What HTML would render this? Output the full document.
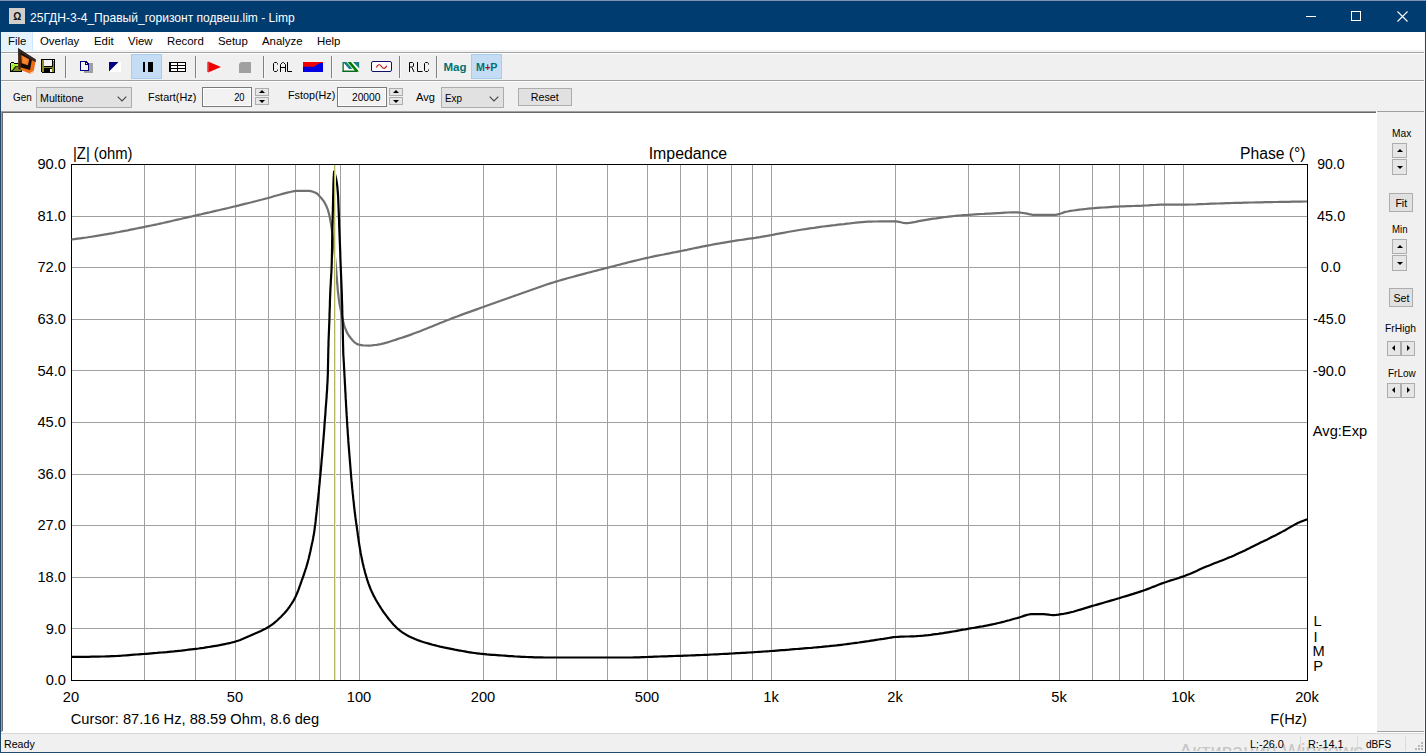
<!DOCTYPE html>
<html>
<head>
<meta charset="utf-8">
<title>Limp</title>
<style>
html,body{margin:0;padding:0;}
body{width:1426px;height:753px;overflow:hidden;background:#f0f0f0;font-family:"Liberation Sans",sans-serif;font-size:12px;color:#000;position:relative;}
.abs{position:absolute;}
#titlebar{left:0;top:0;width:1426px;height:32px;background:#013c70;border-top:1px solid #7f93ad;box-sizing:border-box;}
#title{left:30px;top:10px;color:#fff;font-size:12.05px;white-space:nowrap;line-height:16px;}
#appicon{left:9px;top:8px;width:16px;height:16px;background:#d2cfcb;}
#menubar{left:1px;top:32px;width:1424px;height:18px;background:#fff;border-bottom:1px solid #f0f0f0;box-shadow:0 1px 0 #f6f6f6;}
.mi{position:absolute;top:34.4px;font-size:11.4px;line-height:14px;white-space:nowrap;}
#filehl{left:1px;top:32px;width:31px;height:19px;background:#e5f3ff;border-right:1px solid #cce8ff;}
#tb{left:1px;top:54px;width:1424px;height:26px;background:#f0f0f0;}
#db{left:1px;top:82px;width:1424px;height:29px;background:#f0f0f0;}
.hline{position:absolute;left:1px;width:1424px;height:1px;}
.lbl{position:absolute;transform-origin:0 0;font-size:11.3px;line-height:13px;white-space:nowrap;}
.combo{position:absolute;background:#e1e1e1;border:1px solid #adadad;box-sizing:border-box;}
.edit{position:absolute;background:#f2f2f2;border:1px solid #7a7a7a;box-sizing:border-box;box-shadow:inset 0 0 0 1px #fff;}
.btn{position:absolute;background:#e1e1e1;border:1px solid #adadad;box-sizing:border-box;text-align:center;font-size:11.3px;}
.sep{position:absolute;width:1px;top:56px;height:22px;background:#808080;border-right:1px solid #f8f8f8;}
#view{left:3px;top:113px;width:1373px;height:619px;background:#fff;}
#status{left:1px;top:734px;width:1424px;height:18px;background:#f0f0f0;}

.tbon{background:#c4ddf4;border:1px solid #a6cdf0;box-sizing:border-box;}
.tbt{font-weight:bold;font-size:11.5px;line-height:14px;white-space:nowrap;}
.ct{transform-origin:0 0;position:absolute;left:3px;top:4px;font-size:11.3px;line-height:13px;}
.chev{position:absolute;right:4px;top:8px;}
.et{transform-origin:100% 0;position:absolute;right:6px;top:3px;font-size:11.3px;line-height:13px;}
.spin{position:absolute;width:14px;height:19px;}
.spin i{position:absolute;left:0;width:100%;box-sizing:border-box;border:1px solid #adadad;background:#e6e6e6;}
.spin i.up{top:0;height:8px;}
.spin i.dn{top:9px;height:8px;}
.spin i.up:after{content:"";position:absolute;left:50%;top:50%;margin:-2px 0 0 -3px;border:3px solid transparent;border-top:none;border-bottom:3px solid #000;}
.spin i.dn:after{content:"";position:absolute;left:50%;top:50%;margin:-1px 0 0 -3px;border:3px solid transparent;border-bottom:none;border-top:3px solid #000;}
.hspin{position:absolute;width:28px;height:15px;}
.hspin i{position:absolute;top:0;height:15px;width:14px;box-sizing:border-box;border:1px solid #adadad;background:#e6e6e6;}
.hspin i.lf{left:0;} .hspin i.rt{left:14px;}
.hspin i.lf:after{content:"";position:absolute;left:50%;top:50%;margin:-4px 0 0 -2px;border:3px solid transparent;border-left:none;border-right:3px solid #000;}
.hspin i.rt:after{content:"";position:absolute;left:50%;top:50%;margin:-4px 0 0 -1px;border:3px solid transparent;border-right:none;border-left:3px solid #000;}
#wm{left:1179px;top:738px;height:13px;overflow:hidden;font-size:20px;line-height:26px;color:#c6c6c6;white-space:nowrap;}
svg text{font-family:"Liberation Sans",sans-serif;}
</style>
</head>
<body>
<div class="abs" id="titlebar"></div>
<div class="abs" id="appicon"></div>
<div class="abs" id="title">25ГДН-3-4_Правый_горизонт подвеш.lim - Limp</div>
<div class="abs" id="menubar"></div>
<div class="abs" id="filehl"></div>
<div class="mi" style="left:8px">File</div>
<div class="mi" style="left:40px">Overlay</div>
<div class="mi" style="left:94px">Edit</div>
<div class="mi" style="left:128px">View</div>
<div class="mi" style="left:167px">Record</div>
<div class="mi" style="left:218px">Setup</div>
<div class="mi" style="left:262px">Analyze</div>
<div class="mi" style="left:317px">Help</div>
<div class="hline" style="top:52px;background:#a0a0a0"></div>
<div class="hline" style="top:53px;background:#fff"></div>
<div class="abs" id="tb"></div>
<div class="hline" style="top:80px;background:#a0a0a0"></div>
<div class="hline" style="top:81px;background:#fff"></div>
<div class="abs" id="db"></div>
<!-- toolbar pressed buttons -->
<div class="abs tbon" style="left:131px;top:54px;width:31px;height:25px"></div>
<div class="abs tbon" style="left:471px;top:54px;width:31px;height:25px"></div>
<div class="sep" style="left:65px"></div>
<div class="sep" style="left:195px"></div>
<div class="sep" style="left:263px"></div>
<div class="sep" style="left:331px"></div>
<div class="sep" style="left:399px"></div>
<div class="sep" style="left:436px"></div>
<div class="abs tbt" style="left:443.500px;top:60px;color:#007272">Mag</div>
<div class="abs tbt" style="left:476px;top:60px;color:#007272;transform:scaleX(0.93);transform-origin:0 0">M<span style="color:#a80018;font-size:10px;position:relative;top:-0.500px">+</span>P</div>
<!-- dialog bar -->
<div class="lbl" style="left:12.5px;top:91px;transform:scaleX(0.88)">Gen</div>
<div class="combo" style="left:36px;top:87px;width:96px;height:21px"><span class="ct" style="transform:scaleX(0.945)">Multitone</span><svg class="chev" width="10" height="6" viewBox="0 0 10 6"><path d="M0.7,0.7 L5,5 L9.3,0.7" fill="none" stroke="#444" stroke-width="1.1"/></svg></div>
<div class="lbl" style="left:147.5px;top:90.500px;transform:scaleX(0.965)">Fstart(Hz)</div>
<div class="edit" style="left:202px;top:87px;width:50px;height:20px"><span class="et" style="transform:scaleX(0.83)">20</span></div>
<div class="spin" style="left:255px;top:88px"><i class="up"></i><i class="dn"></i></div>
<div class="lbl" style="left:287.5px;top:88.700px;transform:scaleX(0.955)">Fstop(Hz)</div>
<div class="edit" style="left:337px;top:87px;width:50px;height:20px"><span class="et" style="transform:scaleX(0.906)">20000</span></div>
<div class="spin" style="left:389px;top:88px"><i class="up"></i><i class="dn"></i></div>
<div class="lbl" style="left:416px;top:91px;transform:scaleX(0.98)">Avg</div>
<div class="combo" style="left:441px;top:87px;width:63px;height:21px"><span class="ct" style="transform:scaleX(0.875)">Exp</span><svg class="chev" width="10" height="6" viewBox="0 0 10 6"><path d="M0.7,0.7 L5,5 L9.3,0.7" fill="none" stroke="#444" stroke-width="1.1"/></svg></div>
<div class="btn" style="left:518px;top:88px;width:54px;height:18px;line-height:16px"><span style="display:inline-block;transform:scaleX(0.947)">Reset</span></div>
<!-- view -->
<div class="abs" style="left:1px;top:111px;width:1375px;height:1px;background:#a0a0a0"></div>
<div class="abs" style="left:2px;top:112px;width:1374px;height:1px;background:#696969"></div>
<div class="abs" style="left:1377px;top:111px;width:47px;height:1px;background:#a0a0a0"></div>
<div class="abs" style="left:1px;top:111px;width:1px;height:622px;background:#8aa4bd"></div><div class="abs" style="left:2px;top:112px;width:1px;height:619px;background:#696969"></div><div class="abs" style="left:2px;top:731px;width:1374px;height:1px;background:#e3e3e3"></div>
<div class="abs" id="view"></div>
<div class="abs" style="left:1376px;top:111px;width:1px;height:622px;background:#fff"></div>
<div class="abs" style="left:1377px;top:731px;width:47px;height:1px;background:#a0a0a0"></div>
<div class="abs" style="left:1px;top:732px;width:1424px;height:1px;background:#fff"></div>
<!-- right panel -->
<div class="lbl" style="left:1391.5px;top:127px;transform:scaleX(0.905)">Max</div>
<div class="spin" style="left:1392px;top:143px;width:15px"><i class="up" style="height:15px"></i><i class="dn" style="height:16px;top:16px"></i></div>
<div class="btn" style="left:1389px;top:193px;width:24px;height:19px;line-height:18px"><span style="display:inline-block;transform:scaleX(0.94)">Fit</span></div>
<div class="lbl" style="left:1392px;top:223px;transform:scaleX(0.85)">Min</div>
<div class="spin" style="left:1392px;top:239px;width:15px"><i class="up" style="height:15px"></i><i class="dn" style="height:16px;top:16px"></i></div>
<div class="btn" style="left:1389px;top:288px;width:24px;height:19px;line-height:18px"><span style="display:inline-block;transform:scaleX(0.94)">Set</span></div>
<div class="lbl" style="left:1384.5px;top:322px;transform:scaleX(0.91)">FrHigh</div>
<div class="hspin" style="left:1387px;top:341px"><i class="lf"></i><i class="rt"></i></div>
<div class="lbl" style="left:1387.5px;top:367px;transform:scaleX(0.88)">FrLow</div>
<div class="hspin" style="left:1387px;top:383px"><i class="lf"></i><i class="rt"></i></div>
<!-- status -->
<div class="abs" style="left:1px;top:733px;width:1424px;height:1px;background:#d7d7d7"></div>
<div class="abs" id="status"></div>
<div class="abs" id="wm">Активация Windows</div>
<div class="lbl" style="left:4px;top:737px;font-size:11.7px;transform:scaleX(0.91)">Ready</div>
<div class="lbl" style="left:1250px;top:736.5px;font-size:11.7px;transform:scaleX(0.93)">L:-26.0</div>
<div class="lbl" style="left:1308px;top:736.5px;font-size:11.7px;transform:scaleX(0.93)">R:-14.1</div>
<div class="lbl" style="left:1366px;top:736.5px;font-size:11.7px;transform:scaleX(0.86)">dBFS</div>
<div class="abs" style="left:1300px;top:736px;width:1px;height:15px;background:#dadada"></div>
<div class="abs" style="left:1357px;top:736px;width:1px;height:15px;background:#dadada"></div>
<div class="abs" style="left:1405px;top:736px;width:1px;height:15px;background:#dadada"></div>
<!-- window borders -->
<div class="abs" style="left:0;top:32px;width:1px;height:721px;background:#21486e"></div>
<div class="abs" style="left:1424px;top:32px;width:1px;height:720px;background:#f4f9fd"></div>
<div class="abs" style="left:1425px;top:32px;width:1px;height:721px;background:#21486e"></div>
<div class="abs" style="left:0;top:752px;width:1426px;height:1px;background:#21486e"></div>
<svg class="abs" style="left:0;top:0" width="1426" height="753" viewBox="0 0 1426 753" shape-rendering="crispEdges">
<g fill="#a0a0a0">
<rect x="144" y="164" width="1" height="516"/>
<rect x="195" y="164" width="1" height="516"/>
<rect x="235" y="164" width="1" height="516"/>
<rect x="268" y="164" width="1" height="516"/>
<rect x="295" y="164" width="1" height="516"/>
<rect x="319" y="164" width="1" height="516"/>
<rect x="340" y="164" width="1" height="516"/>
<rect x="359" y="164" width="1" height="516"/>
<rect x="483" y="164" width="1" height="516"/>
<rect x="556" y="164" width="1" height="516"/>
<rect x="607" y="164" width="1" height="516"/>
<rect x="647" y="164" width="1" height="516"/>
<rect x="680" y="164" width="1" height="516"/>
<rect x="707" y="164" width="1" height="516"/>
<rect x="731" y="164" width="1" height="516"/>
<rect x="752" y="164" width="1" height="516"/>
<rect x="771" y="164" width="1" height="516"/>
<rect x="895" y="164" width="1" height="516"/>
<rect x="968" y="164" width="1" height="516"/>
<rect x="1019" y="164" width="1" height="516"/>
<rect x="1059" y="164" width="1" height="516"/>
<rect x="1092" y="164" width="1" height="516"/>
<rect x="1119" y="164" width="1" height="516"/>
<rect x="1143" y="164" width="1" height="516"/>
<rect x="1164" y="164" width="1" height="516"/>
<rect x="1183" y="164" width="1" height="516"/>
<rect x="71" y="216" width="1236" height="1"/>
<rect x="71" y="267" width="1236" height="1"/>
<rect x="71" y="319" width="1236" height="1"/>
<rect x="71" y="370" width="1236" height="1"/>
<rect x="71" y="422" width="1236" height="1"/>
<rect x="71" y="474" width="1236" height="1"/>
<rect x="71" y="525" width="1236" height="1"/>
<rect x="71" y="577" width="1236" height="1"/>
<rect x="71" y="628" width="1236" height="1"/>
</g>
<rect x="71.5" y="164.5" width="1236" height="516" fill="none" stroke="#000" stroke-width="1"/>
<g shape-rendering="auto" fill="none" stroke-linejoin="round" stroke-linecap="butt">
<path d="M71.5,239.5 L74.5,239.1 L77.5,238.7 L80.4,238.3 L83.4,237.9 L86.4,237.5 L89.3,237.0 L92.3,236.6 L92.8,236.5 L95.3,236.1 L98.2,235.6 L101.2,235.1 L104.1,234.6 L107.1,234.1 L110.0,233.6 L113.0,233.1 L115.9,232.5 L118.9,232.0 L121.8,231.4 L124.8,230.8 L127.7,230.3 L130.7,229.7 L133.6,229.1 L136.6,228.5 L139.5,227.9 L142.5,227.3 L144.6,226.9 L145.4,226.7 L148.3,226.1 L151.3,225.5 L154.2,224.9 L157.1,224.3 L160.1,223.6 L163.0,223.0 L165.9,222.3 L168.8,221.7 L171.8,221.0 L174.7,220.3 L177.6,219.6 L180.5,219.0 L183.5,218.3 L186.4,217.6 L189.3,216.9 L192.2,216.3 L195.2,215.6 L195.6,215.5 L198.1,214.9 L201.0,214.3 L203.9,213.6 L206.9,212.9 L209.8,212.3 L212.7,211.6 L215.6,210.9 L218.6,210.2 L221.5,209.5 L224.4,208.9 L227.3,208.2 L230.2,207.5 L233.1,206.8 L235.5,206.2 L236.1,206.1 L239.0,205.4 L241.9,204.6 L244.8,203.9 L247.7,203.2 L250.6,202.5 L253.5,201.7 L256.4,201.0 L259.3,200.2 L262.2,199.5 L265.2,198.7 L268.1,198.0 L268.3,197.9 L271.0,197.2 L273.8,196.3 L276.7,195.5 L279.6,194.7 L282.5,193.9 L285.4,193.1 L288.3,192.4 L289.0,192.3 L291.3,191.8 L294.2,191.2 L297.2,190.8 L298.0,190.8 L300.2,190.8 L303.2,190.8 L306.2,190.8 L308.7,190.8 L309.2,190.8 L312.2,191.4 L315.0,192.5 L316.0,193.0 L317.5,194.0 L319.6,196.2 L320.0,196.6 L321.6,198.5 L323.5,200.9 L324.5,202.5 L325.0,203.4 L326.4,206.1 L327.5,208.9 L327.6,209.2 L328.4,211.7 L329.2,214.6 L329.8,217.6 L330.3,220.0 L330.4,220.5 L330.9,223.5 L331.4,226.4 L331.8,229.4 L332.2,232.4 L332.6,235.4 L332.7,236.0 L333.0,238.3 L333.3,241.3 L333.7,244.3 L334.0,247.3 L334.3,250.3 L334.6,253.2 L334.9,256.2 L335.2,259.2 L335.3,260.0 L335.5,262.2 L335.8,265.2 L336.0,268.2 L336.3,271.2 L336.5,274.2 L336.7,277.2 L337.0,280.2 L337.2,283.2 L337.5,286.1 L337.7,289.1 L338.0,292.1 L338.4,295.1 L338.6,297.2 L338.7,298.1 L339.1,301.0 L339.6,304.0 L340.1,307.0 L340.7,309.9 L341.2,312.9 L341.3,313.2 L341.8,315.8 L342.5,318.7 L343.2,321.6 L344.0,324.5 L344.6,326.5 L344.9,327.4 L346.0,330.2 L347.0,332.5 L347.2,332.9 L348.8,335.5 L350.3,337.5 L350.6,337.9 L352.5,340.3 L354.5,342.3 L354.6,342.4 L357.1,344.1 L359.2,344.8 L359.9,344.9 L362.9,345.3 L365.9,345.5 L368.0,345.6 L368.9,345.6 L371.9,345.4 L374.9,345.0 L376.8,344.8 L377.9,344.6 L380.8,344.1 L383.7,343.4 L386.6,342.6 L389.5,341.7 L392.4,340.8 L395.3,339.9 L398.1,338.9 L400.0,338.3 L401.0,338.0 L403.8,337.1 L406.7,336.1 L409.5,335.1 L412.3,334.1 L415.1,333.0 L417.9,332.0 L420.0,331.2 L420.7,330.9 L423.5,329.8 L426.3,328.7 L429.1,327.6 L431.9,326.5 L434.7,325.3 L437.4,324.2 L440.2,323.0 L443.0,321.9 L445.8,320.8 L448.6,319.7 L450.5,318.9 L451.4,318.6 L454.2,317.5 L457.0,316.5 L459.8,315.4 L462.6,314.4 L465.4,313.4 L468.2,312.4 L471.1,311.4 L473.9,310.4 L476.7,309.4 L479.6,308.3 L482.4,307.3 L483.3,307.0 L485.2,306.3 L488.0,305.3 L490.8,304.3 L493.7,303.2 L496.5,302.2 L499.3,301.2 L502.1,300.2 L504.9,299.2 L507.8,298.2 L510.6,297.2 L513.4,296.2 L513.6,296.1 L516.3,295.2 L519.1,294.2 L521.9,293.2 L524.7,292.2 L527.6,291.2 L530.4,290.2 L533.2,289.2 L536.1,288.2 L538.9,287.2 L541.8,286.2 L544.6,285.3 L547.4,284.3 L550.3,283.4 L553.2,282.5 L556.0,281.6 L556.5,281.5 L558.9,280.8 L561.8,279.9 L564.6,279.1 L567.5,278.3 L570.4,277.5 L573.3,276.7 L576.2,275.9 L579.1,275.1 L582.0,274.4 L584.9,273.6 L587.8,272.8 L590.7,272.1 L593.6,271.3 L596.5,270.6 L599.4,269.8 L602.4,269.1 L605.3,268.3 L607.0,267.9 L608.2,267.6 L611.1,266.8 L614.0,266.1 L616.9,265.3 L619.8,264.6 L622.7,263.8 L625.6,263.1 L628.5,262.3 L631.4,261.6 L634.3,260.9 L637.2,260.2 L640.2,259.5 L643.1,258.8 L646.0,258.1 L647.4,257.8 L648.9,257.5 L651.9,256.8 L654.8,256.2 L657.7,255.6 L660.7,255.0 L663.6,254.5 L666.6,253.9 L669.5,253.3 L672.5,252.7 L675.4,252.2 L678.3,251.6 L680.2,251.2 L681.3,251.0 L684.2,250.4 L687.2,249.8 L690.1,249.1 L693.0,248.5 L696.0,247.9 L698.9,247.3 L701.8,246.7 L704.8,246.1 L707.5,245.6 L707.7,245.6 L710.7,245.0 L713.6,244.4 L716.6,243.9 L719.5,243.4 L722.5,242.8 L725.4,242.3 L728.4,241.8 L731.4,241.3 L731.5,241.3 L734.3,240.9 L737.3,240.4 L740.3,240.0 L743.2,239.6 L746.2,239.1 L749.2,238.7 L752.1,238.3 L755.1,237.9 L758.1,237.4 L760.0,237.1 L761.0,236.9 L764.0,236.4 L766.9,235.9 L769.9,235.3 L771.6,235.0 L772.8,234.8 L775.8,234.2 L778.7,233.7 L781.7,233.1 L784.6,232.6 L787.6,232.0 L790.5,231.5 L793.5,231.0 L796.5,230.5 L799.4,230.0 L802.4,229.5 L803.1,229.4 L805.3,229.1 L808.3,228.6 L811.3,228.2 L814.2,227.8 L817.2,227.3 L820.2,226.9 L823.2,226.5 L826.1,226.2 L829.1,225.8 L832.1,225.4 L835.1,225.1 L838.1,224.7 L841.0,224.4 L841.0,224.4 L844.0,224.1 L847.0,223.7 L850.0,223.4 L853.0,223.0 L856.0,222.7 L858.9,222.4 L861.9,222.1 L864.9,221.9 L867.9,221.7 L870.9,221.6 L871.3,221.6 L873.9,221.5 L876.9,221.5 L879.9,221.4 L882.9,221.4 L885.9,221.4 L888.9,221.3 L891.9,221.3 L894.9,221.3 L895.3,221.3 L897.9,221.6 L900.8,222.3 L903.8,223.0 L905.4,223.1 L906.7,223.1 L909.7,222.8 L912.7,222.3 L915.6,221.8 L918.6,221.2 L921.6,220.6 L921.8,220.6 L924.5,220.2 L927.5,219.7 L930.4,219.2 L933.4,218.7 L936.4,218.3 L939.3,217.8 L942.3,217.4 L945.3,217.0 L947.0,216.8 L948.3,216.7 L951.2,216.3 L954.2,216.0 L957.2,215.7 L960.2,215.5 L963.2,215.2 L966.2,215.0 L968.5,214.8 L969.2,214.8 L972.2,214.6 L975.2,214.4 L978.2,214.2 L981.1,214.0 L984.1,213.9 L987.1,213.7 L990.1,213.6 L993.1,213.4 L995.0,213.3 L996.1,213.2 L999.1,213.1 L1002.1,212.9 L1005.1,212.7 L1008.1,212.5 L1011.1,212.4 L1014.1,212.3 L1015.2,212.3 L1017.1,212.4 L1020.1,212.6 L1023.1,213.0 L1025.3,213.3 L1026.0,213.4 L1029.0,214.1 L1031.9,214.7 L1032.9,214.8 L1034.9,214.8 L1037.9,214.8 L1040.9,214.8 L1043.9,214.8 L1047.0,214.8 L1050.0,214.8 L1053.0,214.8 L1055.6,214.8 L1055.9,214.8 L1058.8,214.2 L1061.6,213.2 L1064.5,212.1 L1065.7,211.8 L1067.4,211.5 L1070.4,210.9 L1073.4,210.5 L1076.3,210.1 L1079.3,209.7 L1080.8,209.5 L1082.3,209.3 L1085.3,209.0 L1088.3,208.7 L1091.2,208.4 L1094.2,208.2 L1097.2,207.9 L1100.0,207.7 L1100.2,207.7 L1103.2,207.5 L1106.2,207.3 L1109.2,207.1 L1112.2,206.9 L1115.2,206.7 L1118.2,206.6 L1119.5,206.5 L1121.2,206.4 L1124.2,206.3 L1127.2,206.2 L1130.2,206.1 L1133.2,206.0 L1136.2,205.9 L1139.2,205.8 L1142.2,205.7 L1143.7,205.6 L1145.2,205.5 L1148.2,205.4 L1151.2,205.2 L1154.2,205.0 L1157.1,204.8 L1160.1,204.7 L1163.1,204.6 L1164.1,204.6 L1166.1,204.6 L1169.1,204.6 L1172.1,204.6 L1175.1,204.6 L1178.1,204.6 L1181.1,204.6 L1183.7,204.6 L1184.1,204.6 L1187.1,204.6 L1190.1,204.5 L1193.1,204.5 L1196.1,204.4 L1199.1,204.2 L1202.1,204.1 L1205.1,204.0 L1208.1,203.8 L1211.1,203.7 L1214.1,203.6 L1217.1,203.5 L1220.1,203.4 L1221.8,203.3 L1223.1,203.3 L1226.1,203.2 L1229.1,203.1 L1232.1,203.0 L1235.1,202.9 L1238.1,202.8 L1241.1,202.8 L1244.1,202.7 L1247.1,202.6 L1250.1,202.5 L1253.1,202.5 L1256.1,202.4 L1259.1,202.3 L1262.1,202.3 L1264.6,202.2 L1265.1,202.2 L1268.1,202.1 L1271.1,202.1 L1274.1,202.0 L1277.1,202.0 L1280.1,201.9 L1283.1,201.9 L1286.1,201.8 L1289.1,201.8 L1292.1,201.7 L1295.1,201.7 L1298.1,201.6 L1301.1,201.6 L1304.1,201.5 L1307.0,201.5" stroke="#707070" stroke-width="2.2"/>
<path d="M71.5,656.9 L74.0,656.9 L76.5,656.9 L79.0,656.9 L81.5,656.9 L84.0,656.8 L86.5,656.8 L89.0,656.8 L91.5,656.7 L94.0,656.7 L96.5,656.6 L99.0,656.6 L101.5,656.5 L103.8,656.5 L104.0,656.5 L106.5,656.4 L109.0,656.3 L111.5,656.2 L114.0,656.1 L116.5,656.0 L119.0,655.8 L121.5,655.7 L124.0,655.5 L126.5,655.3 L129.0,655.1 L131.5,654.9 L133.9,654.7 L136.4,654.5 L138.9,654.3 L141.4,654.1 L143.9,654.0 L144.6,653.9 L146.4,653.8 L148.9,653.6 L151.4,653.4 L153.9,653.2 L156.4,653.0 L158.9,652.7 L161.4,652.5 L163.9,652.3 L166.4,652.1 L168.8,651.8 L171.3,651.6 L173.8,651.4 L176.3,651.1 L178.8,650.8 L181.3,650.6 L183.8,650.3 L186.3,650.0 L188.7,649.7 L191.2,649.4 L193.7,649.1 L195.4,648.9 L196.2,648.8 L198.6,648.5 L201.1,648.1 L203.6,647.8 L206.1,647.4 L208.6,647.0 L211.1,646.6 L213.6,646.2 L216.0,645.8 L218.5,645.4 L221.0,644.9 L223.4,644.4 L225.9,643.9 L228.3,643.3 L230.7,642.8 L233.1,642.2 L235.3,641.6 L235.5,641.5 L237.9,640.8 L240.2,640.0 L242.5,639.1 L244.8,638.1 L247.1,637.1 L249.4,636.1 L251.7,635.0 L254.0,633.9 L255.0,633.5 L256.3,632.9 L258.6,631.9 L260.9,630.9 L263.2,629.8 L265.4,628.7 L267.6,627.5 L268.5,627.0 L269.7,626.2 L271.7,624.8 L273.7,623.3 L275.7,621.7 L277.6,620.0 L279.4,618.3 L281.1,616.7 L281.2,616.6 L282.9,614.8 L284.6,613.0 L286.3,611.0 L287.8,609.1 L289.0,607.5 L289.3,607.1 L290.7,605.0 L292.1,602.9 L293.4,600.8 L294.6,598.6 L295.0,597.8 L295.7,596.4 L296.7,594.1 L297.7,591.8 L298.6,589.4 L299.4,587.1 L300.3,584.7 L301.1,582.3 L301.9,580.0 L302.0,579.8 L302.8,577.6 L303.6,575.3 L304.4,572.9 L305.2,570.5 L306.0,568.1 L306.7,565.8 L307.4,563.4 L307.5,563.0 L308.0,561.0 L308.7,558.5 L309.3,556.1 L309.8,553.7 L310.4,551.2 L310.9,548.8 L311.4,546.3 L311.5,546.0 L311.9,543.9 L312.5,541.4 L313.0,539.0 L313.4,536.5 L313.9,534.1 L314.2,532.0 L314.3,531.6 L314.6,529.1 L314.9,526.7 L315.3,524.2 L315.6,521.7 L315.8,519.2 L316.1,516.7 L316.4,514.2 L316.7,511.7 L316.9,509.6 L316.9,509.3 L317.2,506.8 L317.5,504.3 L317.7,501.8 L318.0,499.3 L318.3,496.8 L318.5,494.3 L318.8,491.9 L319.0,489.4 L319.2,486.9 L319.5,484.4 L319.7,481.9 L319.9,479.4 L320.2,476.9 L320.4,474.4 L320.5,473.4 L320.6,471.9 L320.9,469.5 L321.1,467.0 L321.3,464.5 L321.5,462.0 L321.7,459.5 L322.0,457.0 L322.2,454.5 L322.4,452.0 L322.6,449.5 L322.8,447.0 L323.0,444.5 L323.2,442.1 L323.4,439.6 L323.6,437.1 L323.8,434.6 L324.0,432.1 L324.2,429.6 L324.4,427.1 L324.5,424.6 L324.7,422.3 L324.7,422.1 L324.9,419.6 L325.1,417.1 L325.3,414.6 L325.5,412.1 L325.6,409.6 L325.8,407.1 L326.0,404.7 L326.2,402.2 L326.4,399.7 L326.6,397.2 L326.7,394.7 L326.9,392.2 L327.1,389.7 L327.2,387.2 L327.3,384.7 L327.5,382.2 L327.6,379.7 L327.7,377.2 L327.8,374.7 L327.9,372.2 L327.9,371.3 L327.9,369.7 L328.0,367.2 L328.0,364.7 L328.1,362.2 L328.1,359.7 L328.2,357.2 L328.2,354.7 L328.3,352.2 L328.3,350.0 L328.3,349.7 L328.4,347.2 L328.5,344.7 L328.5,342.2 L328.6,339.7 L328.7,337.2 L328.8,334.7 L328.9,332.2 L329.0,329.7 L329.1,327.2 L329.2,324.7 L329.3,322.5 L329.3,322.2 L329.4,319.7 L329.5,317.2 L329.5,314.7 L329.6,312.2 L329.7,309.7 L329.8,307.2 L329.9,304.7 L329.9,302.2 L330.0,299.7 L330.1,297.2 L330.2,294.7 L330.2,294.6 L330.3,292.2 L330.4,289.8 L330.5,287.3 L330.7,284.8 L330.8,282.3 L330.9,279.8 L331.1,277.3 L331.2,274.8 L331.4,272.3 L331.5,269.8 L331.6,267.3 L331.7,264.8 L331.8,262.3 L331.8,261.0 L331.8,259.8 L331.9,257.3 L331.9,254.8 L332.0,252.3 L332.0,249.8 L332.1,247.3 L332.1,244.8 L332.1,242.3 L332.2,239.8 L332.2,238.4 L332.2,237.3 L332.3,234.8 L332.3,232.3 L332.4,229.8 L332.4,227.3 L332.5,224.8 L332.6,222.3 L332.6,219.8 L332.7,217.3 L332.7,214.8 L332.8,212.3 L332.9,209.8 L332.9,207.3 L333.0,204.8 L333.0,203.9 L333.0,202.3 L333.1,199.8 L333.1,197.3 L333.2,194.8 L333.3,192.3 L333.3,189.8 L333.4,187.3 L333.4,184.8 L333.5,182.3 L333.6,180.0 L333.6,179.8 L333.7,177.3 L333.9,174.8 L334.0,172.3 L334.1,171.5 L334.9,173.9 L335.2,175.0 L335.5,176.3 L336.1,178.7 L336.6,181.2 L336.6,181.3 L336.9,183.6 L337.3,186.1 L337.5,188.6 L337.7,191.1 L337.9,193.2 L337.9,193.6 L338.1,196.1 L338.2,198.6 L338.3,201.1 L338.4,203.6 L338.5,206.1 L338.6,208.6 L338.7,211.1 L338.8,213.6 L338.9,216.1 L338.9,217.2 L339.0,218.6 L339.1,221.1 L339.1,223.6 L339.2,226.1 L339.3,228.6 L339.4,231.1 L339.5,233.6 L339.6,236.1 L339.7,238.6 L339.8,241.1 L339.9,243.6 L339.9,243.7 L340.0,246.1 L340.1,248.6 L340.2,251.1 L340.3,253.6 L340.3,256.1 L340.4,258.6 L340.5,261.1 L340.6,263.6 L340.7,266.0 L340.7,266.1 L340.8,268.6 L340.9,271.0 L341.0,273.5 L341.1,276.0 L341.2,278.5 L341.3,281.0 L341.4,283.5 L341.5,286.0 L341.6,288.5 L341.7,291.0 L341.8,293.5 L341.9,296.0 L341.9,297.2 L341.9,298.5 L342.0,301.0 L342.1,303.5 L342.2,306.0 L342.2,308.5 L342.3,311.0 L342.3,313.5 L342.4,316.0 L342.5,318.5 L342.5,321.0 L342.6,323.5 L342.6,323.8 L342.7,326.0 L342.7,328.5 L342.8,331.0 L342.8,333.5 L342.9,336.0 L342.9,338.5 L343.0,341.0 L343.0,343.5 L343.1,346.0 L343.2,348.5 L343.2,350.0 L343.2,351.0 L343.3,353.5 L343.4,356.0 L343.6,358.5 L343.7,361.0 L343.9,363.5 L344.0,366.0 L344.1,368.5 L344.3,371.0 L344.3,371.3 L344.4,373.5 L344.5,376.0 L344.7,378.5 L344.8,381.0 L344.9,383.5 L345.1,386.0 L345.2,388.5 L345.3,391.0 L345.5,393.5 L345.6,396.0 L345.7,398.4 L345.9,400.9 L346.0,403.4 L346.1,405.9 L346.3,408.4 L346.4,410.9 L346.6,413.4 L346.7,415.9 L346.9,418.4 L347.0,420.9 L347.1,422.3 L347.2,423.4 L347.3,425.9 L347.5,428.4 L347.7,430.9 L347.8,433.4 L348.0,435.9 L348.2,438.4 L348.3,440.9 L348.5,443.4 L348.7,445.9 L348.9,448.3 L349.1,450.8 L349.3,453.3 L349.5,455.8 L349.7,458.3 L349.9,460.8 L350.1,463.3 L350.3,465.8 L350.5,468.3 L350.7,470.8 L350.9,473.3 L350.9,473.4 L351.1,475.8 L351.3,478.2 L351.5,480.7 L351.8,483.2 L352.0,485.7 L352.2,488.2 L352.5,490.7 L352.7,493.2 L353.0,495.7 L353.2,498.2 L353.5,500.6 L353.8,503.1 L354.0,505.6 L354.3,508.1 L354.5,509.6 L354.6,510.6 L354.9,513.1 L355.2,515.5 L355.5,518.0 L355.9,520.5 L356.2,523.0 L356.6,525.5 L356.9,527.9 L357.2,530.0 L357.3,530.4 L357.6,532.9 L357.9,535.4 L358.3,537.8 L358.6,540.3 L359.0,542.8 L359.4,545.3 L359.8,547.7 L360.2,550.2 L360.5,552.0 L360.6,552.7 L361.1,555.1 L361.6,557.6 L362.1,560.0 L362.6,562.5 L363.2,564.9 L363.7,567.3 L364.4,569.8 L365.0,572.2 L365.1,572.6 L365.7,574.6 L366.4,577.0 L367.1,579.4 L367.9,581.8 L368.7,584.1 L369.6,586.5 L370.5,588.8 L371.0,590.0 L371.5,591.1 L372.5,593.3 L373.6,595.6 L374.8,597.8 L376.0,600.0 L377.3,602.2 L378.6,604.3 L379.0,605.0 L379.9,606.4 L381.2,608.5 L382.6,610.6 L384.0,612.7 L385.5,614.7 L387.0,616.7 L388.0,618.0 L388.5,618.7 L390.1,620.6 L391.8,622.6 L393.4,624.5 L395.2,626.3 L396.9,628.1 L398.8,629.7 L400.0,630.7 L400.7,631.2 L402.7,632.6 L404.8,633.9 L407.0,635.2 L409.3,636.4 L411.6,637.5 L413.9,638.5 L415.0,639.0 L416.2,639.5 L418.5,640.4 L420.8,641.2 L423.2,642.0 L425.6,642.7 L428.0,643.4 L430.4,644.1 L432.6,644.7 L432.8,644.8 L435.3,645.4 L437.7,646.0 L440.1,646.6 L442.6,647.1 L445.0,647.7 L447.4,648.2 L449.9,648.7 L452.4,649.2 L454.8,649.7 L457.3,650.1 L459.7,650.6 L460.5,650.7 L462.2,651.0 L464.7,651.4 L467.1,651.9 L469.6,652.3 L472.1,652.7 L474.5,653.0 L477.0,653.3 L479.5,653.6 L480.0,653.7 L482.0,653.9 L484.5,654.1 L487.0,654.4 L489.4,654.6 L491.9,654.8 L494.4,654.9 L496.9,655.1 L499.4,655.3 L500.6,655.4 L501.9,655.5 L504.4,655.7 L506.9,655.9 L509.4,656.1 L511.9,656.2 L514.4,656.4 L516.9,656.5 L518.3,656.6 L519.4,656.6 L521.9,656.8 L524.4,656.9 L526.9,657.0 L529.4,657.1 L531.9,657.2 L534.4,657.3 L536.9,657.3 L539.4,657.4 L541.9,657.4 L544.4,657.5 L546.9,657.5 L547.7,657.5 L549.4,657.5 L551.9,657.5 L554.4,657.5 L556.9,657.5 L559.4,657.5 L561.9,657.5 L564.4,657.5 L566.9,657.5 L569.4,657.5 L571.9,657.5 L574.4,657.5 L576.9,657.5 L579.4,657.5 L581.9,657.5 L584.4,657.5 L586.9,657.5 L589.4,657.5 L591.9,657.5 L594.4,657.5 L596.9,657.5 L599.4,657.5 L601.9,657.5 L604.4,657.5 L606.9,657.5 L609.4,657.5 L611.9,657.5 L614.4,657.5 L616.9,657.5 L619.4,657.5 L621.9,657.5 L624.4,657.5 L626.9,657.5 L627.3,657.5 L629.4,657.5 L631.9,657.5 L634.4,657.4 L636.9,657.4 L639.4,657.3 L641.9,657.2 L644.4,657.1 L646.9,657.0 L649.4,656.9 L651.9,656.8 L654.4,656.7 L656.9,656.6 L659.4,656.5 L661.8,656.4 L664.3,656.3 L665.6,656.3 L666.8,656.3 L669.3,656.2 L671.8,656.1 L674.3,656.0 L676.8,655.9 L679.3,655.9 L681.8,655.8 L684.3,655.7 L686.8,655.6 L689.3,655.5 L691.8,655.4 L692.1,655.4 L694.3,655.3 L696.8,655.2 L699.3,655.1 L701.8,655.0 L704.3,654.9 L706.8,654.8 L709.3,654.7 L711.8,654.5 L712.7,654.5 L714.3,654.4 L716.8,654.3 L719.3,654.2 L721.8,654.0 L724.3,653.9 L726.8,653.8 L729.3,653.6 L731.8,653.5 L733.3,653.4 L734.3,653.3 L736.8,653.2 L739.3,653.1 L741.8,652.9 L744.3,652.8 L746.8,652.6 L749.3,652.5 L751.8,652.3 L754.2,652.2 L756.7,652.0 L759.2,651.8 L761.7,651.7 L764.2,651.5 L766.7,651.3 L769.2,651.2 L771.6,651.0 L771.7,651.0 L774.2,650.8 L776.7,650.6 L779.2,650.4 L781.7,650.2 L784.2,650.1 L786.7,649.9 L789.2,649.7 L791.6,649.4 L794.1,649.2 L796.6,649.0 L799.1,648.8 L801.6,648.6 L804.0,648.4 L804.1,648.4 L806.6,648.2 L809.1,648.0 L811.6,647.8 L814.1,647.5 L816.6,647.3 L819.0,647.1 L821.5,646.9 L824.0,646.6 L826.5,646.4 L829.0,646.2 L831.5,645.9 L833.5,645.7 L834.0,645.6 L836.5,645.4 L838.9,645.1 L841.4,644.8 L843.9,644.5 L846.4,644.2 L848.9,643.8 L851.3,643.5 L853.8,643.2 L856.3,642.8 L858.8,642.5 L861.3,642.1 L862.9,641.9 L863.7,641.8 L866.2,641.4 L868.7,641.1 L871.1,640.7 L873.6,640.3 L876.1,639.9 L878.6,639.5 L881.0,639.1 L883.5,638.8 L886.0,638.4 L886.5,638.3 L888.4,638.0 L890.9,637.6 L893.4,637.2 L895.4,637.0 L895.9,637.0 L898.4,636.8 L900.8,636.7 L903.3,636.6 L905.9,636.5 L908.4,636.5 L910.9,636.4 L913.4,636.3 L915.9,636.2 L917.0,636.1 L918.3,636.0 L920.8,635.8 L923.3,635.6 L925.8,635.3 L928.3,635.1 L930.8,634.8 L933.3,634.4 L935.7,634.1 L938.2,633.8 L940.7,633.4 L941.7,633.3 L943.2,633.1 L945.6,632.7 L948.1,632.3 L950.6,631.9 L953.0,631.5 L955.5,631.1 L958.0,630.6 L960.4,630.2 L962.9,629.7 L965.4,629.3 L967.8,628.8 L968.6,628.7 L970.3,628.4 L972.7,628.0 L975.2,627.6 L977.7,627.1 L980.1,626.7 L982.6,626.3 L985.1,625.8 L987.5,625.4 L990.0,624.9 L992.4,624.4 L994.2,624.0 L994.9,623.9 L997.3,623.3 L999.7,622.7 L1002.1,622.1 L1004.6,621.5 L1007.0,620.8 L1009.4,620.2 L1011.8,619.5 L1014.2,618.8 L1016.6,618.2 L1018.8,617.6 L1019.0,617.5 L1021.4,616.8 L1023.8,615.9 L1026.2,615.1 L1028.7,614.5 L1031.1,614.2 L1031.2,614.2 L1033.6,614.2 L1036.1,614.2 L1038.6,614.2 L1041.1,614.2 L1043.5,614.2 L1043.6,614.2 L1046.1,614.4 L1048.6,614.7 L1051.1,615.0 L1052.8,615.1 L1053.5,615.1 L1056.0,614.9 L1058.5,614.6 L1061.0,614.2 L1063.5,613.8 L1065.1,613.5 L1065.9,613.4 L1068.4,612.9 L1070.8,612.3 L1073.2,611.7 L1075.6,611.0 L1078.0,610.3 L1080.4,609.6 L1082.8,608.9 L1085.2,608.1 L1087.6,607.4 L1090.0,606.6 L1092.4,605.9 L1092.9,605.8 L1094.8,605.3 L1097.2,604.6 L1099.6,603.9 L1102.0,603.2 L1104.4,602.5 L1106.8,601.8 L1109.2,601.1 L1111.6,600.4 L1114.0,599.7 L1116.4,599.0 L1118.8,598.3 L1119.4,598.1 L1121.2,597.5 L1123.6,596.8 L1126.0,596.1 L1128.4,595.4 L1130.8,594.6 L1133.2,593.9 L1135.6,593.1 L1137.9,592.4 L1140.3,591.6 L1142.7,590.8 L1143.8,590.4 L1145.0,590.0 L1147.4,589.1 L1149.7,588.2 L1152.0,587.3 L1154.4,586.4 L1156.7,585.4 L1159.0,584.5 L1161.4,583.6 L1163.7,582.8 L1163.9,582.7 L1166.1,582.0 L1168.4,581.2 L1170.8,580.4 L1173.2,579.7 L1175.6,579.0 L1178.0,578.2 L1180.4,577.4 L1182.7,576.6 L1183.9,576.2 L1185.1,575.8 L1187.4,574.8 L1189.7,573.9 L1192.0,572.9 L1194.3,571.9 L1196.6,570.9 L1198.9,569.8 L1201.1,568.8 L1203.4,567.8 L1205.7,566.8 L1207.0,566.3 L1208.0,565.9 L1210.4,564.9 L1212.7,564.0 L1215.0,563.1 L1217.4,562.2 L1219.7,561.3 L1222.0,560.4 L1224.4,559.5 L1226.7,558.6 L1229.0,557.6 L1231.3,556.7 L1231.7,556.5 L1233.6,555.7 L1235.9,554.6 L1238.1,553.6 L1240.4,552.5 L1242.6,551.4 L1244.9,550.4 L1247.1,549.3 L1249.4,548.2 L1251.6,547.0 L1253.9,545.9 L1256.1,544.8 L1256.4,544.7 L1258.4,543.7 L1260.6,542.6 L1262.9,541.6 L1265.1,540.5 L1267.4,539.4 L1269.6,538.2 L1271.8,537.1 L1274.1,536.0 L1276.3,534.9 L1278.5,533.7 L1280.7,532.6 L1281.1,532.4 L1282.9,531.4 L1285.1,530.2 L1287.3,528.9 L1289.4,527.6 L1291.6,526.4 L1293.8,525.1 L1296.0,523.9 L1298.2,522.8 L1299.6,522.2 L1300.5,521.8 L1302.8,520.9 L1305.2,520.0 L1307.0,519.4" stroke="#000" stroke-width="2.2"/>
</g>
<rect x="334" y="165" width="1" height="515" fill="#b4b45a"/>
<rect x="335" y="165" width="1" height="515" fill="#efef9c"/>
<g font-size="14.67px" fill="#000" shape-rendering="auto">
<text x="66" y="169.1" text-anchor="end">90.0</text>
<text x="66" y="220.7" text-anchor="end">81.0</text>
<text x="66" y="272.3" text-anchor="end">72.0</text>
<text x="66" y="323.9" text-anchor="end">63.0</text>
<text x="66" y="375.5" text-anchor="end">54.0</text>
<text x="66" y="427.1" text-anchor="end">45.0</text>
<text x="66" y="478.7" text-anchor="end">36.0</text>
<text x="66" y="530.3" text-anchor="end">27.0</text>
<text x="66" y="581.9" text-anchor="end">18.0</text>
<text x="66" y="633.5" text-anchor="end">9.0</text>
<text x="66" y="685.1" text-anchor="end">0.0</text>
<text x="1317.2" y="169.1" textLength="27.4" lengthAdjust="spacingAndGlyphs">90.0</text>
<text x="1317.0" y="220.7" textLength="28.2" lengthAdjust="spacingAndGlyphs">45.0</text>
<text x="1320.8" y="272.3" textLength="19.9" lengthAdjust="spacingAndGlyphs">0.0</text>
<text x="1313.1" y="323.9" textLength="32.6" lengthAdjust="spacingAndGlyphs">-45.0</text>
<text x="1312.8" y="375.5" textLength="33.1" lengthAdjust="spacingAndGlyphs">-90.0</text>
<text x="71.0" y="702" text-anchor="middle">20</text>
<text x="235.0" y="702" text-anchor="middle">50</text>
<text x="359.0" y="702" text-anchor="middle">100</text>
<text x="483.0" y="702" text-anchor="middle">200</text>
<text x="647.0" y="702" text-anchor="middle">500</text>
<text x="771.0" y="702" text-anchor="middle">1k</text>
<text x="895.0" y="702" text-anchor="middle">2k</text>
<text x="1059.0" y="702" text-anchor="middle">5k</text>
<text x="1183.0" y="702" text-anchor="middle">10k</text>
<text x="1307.0" y="702" text-anchor="middle">20k</text>
<text x="73" y="158.500" font-size="16px" textLength="59.500" lengthAdjust="spacingAndGlyphs">|Z| (ohm)</text>
<text x="648.700" y="158.500" font-size="16px" textLength="78.500" lengthAdjust="spacingAndGlyphs">Impedance</text>
<text x="1240" y="158.500" font-size="16px" textLength="65.500" lengthAdjust="spacingAndGlyphs">Phase (°)</text>
<text x="1312.800" y="435.500">Avg:Exp</text>
<text x="70.800" y="724" textLength="248.300" lengthAdjust="spacingAndGlyphs">Cursor: 87.16 Hz, 88.59 Ohm, 8.6 deg</text>
<text x="1307" y="724" text-anchor="end">F(Hz)</text>
<text x="1313.500" y="626">L</text>
<text x="1313.500" y="641.500">I</text>
<text x="1312.500" y="656">M</text>
<text x="1313.300" y="670.700">P</text>
</g>

<g fill="#b9b9b9" shape-rendering="crispEdges"><rect x="1421" y="742" width="2" height="2"/><rect x="1418" y="745" width="2" height="2"/><rect x="1421" y="745" width="2" height="2"/><rect x="1415" y="748" width="2" height="2"/><rect x="1418" y="748" width="2" height="2"/><rect x="1421" y="748" width="2" height="2"/></g>
<!-- ICONS -->
<g id="icons">
<!-- window controls -->
<g shape-rendering="crispEdges" fill="#fff">
<rect x="1306" y="16" width="10" height="1"/>
<path d="M1351,11h10v10h-10z M1352,12v8h8v-8z" fill-rule="evenodd"/>
</g>
<path d="M1397.5,11.500 L1407.500,21.500 M1407.5,11.500 L1397.5,21.500" stroke="#fff" stroke-width="1.1" fill="none" shape-rendering="auto"/>
<!-- app icon omega -->
<text x="17.200" y="19.700" font-size="10px" text-anchor="middle" font-family="Liberation Serif" font-weight="bold" fill="#111" shape-rendering="auto">Ω</text>
<!-- open folder -->
<g shape-rendering="auto">
<path d="M10,63 h1 v-1 h3 v1 h5 v2 h3 v7 h-12 z" fill="#000"/>
<path d="M11,63 h3 v1 h4 v2 h-2.500 l-3.500,4.500 h-1 z" fill="#b4f436"/>
<path d="M12.800,71 l3.500,-4.500 h4.700 v4.500 z" fill="#7c8c20"/>
<rect x="12" y="65" width="1" height="1" fill="#7ed020"/><rect x="13" y="67" width="1" height="1" fill="#7ed020"/><rect x="14" y="65" width="1" height="1" fill="#7ed020"/>
</g>
<!-- save floppy -->
<g shape-rendering="crispEdges">
<path d="M41,59h14v14h-13v-1h-1z" fill="#000"/>
<rect x="42" y="60" width="12" height="12" fill="#8a8a20"/>
<rect x="44" y="60" width="8" height="6" fill="#f4f4f6"/>
<rect x="44" y="66" width="8" height="1" fill="#000"/>
<rect x="44" y="68" width="8" height="4" fill="#000"/>
<rect x="50" y="69" width="2" height="3" fill="#f4f4f4"/>
<rect x="53" y="60" width="1" height="1" fill="#f4f4f4"/>
<rect x="52" y="60" width="1" height="7" fill="#000"/>
</g>
<!-- copy -->
<g shape-rendering="crispEdges">
<rect x="84" y="63" width="9" height="10" fill="#a0a0a0"/>
<path d="M80,61h6l3,3v7h-9z" fill="#000080"/>
<path d="M81,62h4v3h3v5h-7z" fill="#f4f4f4"/>
<rect x="86" y="63" width="1" height="1" fill="#f4f4f4"/>
</g>
<!-- triangle -->
<g shape-rendering="crispEdges">
<rect x="109" y="62" width="12" height="10" fill="#fff"/>
</g>
<path d="M109,62h9.500L109,71.500z" fill="#000080" shape-rendering="auto"/>
<!-- pause -->
<g shape-rendering="crispEdges" fill="#000">
<rect x="143" y="62" width="2" height="10"/>
<rect x="148" y="62" width="5" height="10"/>
</g>
<!-- table -->
<g shape-rendering="crispEdges">
<rect x="169" y="62" width="17" height="10" fill="#000"/>
<g fill="#fff">
<rect x="171" y="63" width="6" height="2"/><rect x="178" y="63" width="7" height="2"/>
<rect x="171" y="66" width="6" height="2"/><rect x="178" y="66" width="7" height="2"/>
<rect x="171" y="69" width="6" height="2"/><rect x="178" y="69" width="7" height="2"/>
</g>
</g>
<!-- play -->
<path d="M208,61.500 L221,67 L208,72.500z" fill="#f00000" shape-rendering="auto"/>
<rect x="207" y="62" width="1.500" height="10" fill="#e06868" shape-rendering="auto"/>
<!-- stop -->
<path d="M241,62h10v11h-12v-9z" fill="#a0a0a0" shape-rendering="auto"/>
<!-- CAL -->
<g fill="none" stroke="#000" stroke-width="1" shape-rendering="auto">
<path d="M277.500,64.500 v-1 l-1,-1 h-2 l-1,1 v7 l1,1 h2 l1,-1 v-1"/>
<path d="M280.500,72 v-7.500 l2,-2 h1 l2,2 v7.500 M280.500,67.500 h5"/>
<path d="M287.500,62 v9.500 h4.500"/>
</g>
<!-- red/blue -->
<g shape-rendering="auto">
<rect x="303" y="62" width="20" height="10" fill="#0000e0"/>
<path d="M303,62 h20 v1 h-3.500 l-5.500,3.700 h-11z" fill="#f00000"/>
</g>
<!-- green hatch -->
<g shape-rendering="auto">
<rect x="343" y="62" width="16" height="9" fill="#fff"/>
<path d="M353,62h6.200v6.500z" fill="#168080"/>
<path d="M343,62h3.500l6,7h-3.500z" fill="#168080"/>
<path d="M347.500,62h3.500l8,9.500h-3.500z" fill="#008000"/>
<rect x="342.500" y="62" width="1.300" height="10" fill="#0a6a20"/>
<rect x="342.500" y="70.500" width="15" height="1.500" fill="#0a6a20"/>
</g>
<!-- sine box -->
<rect x="371.500" y="61.500" width="20" height="10" rx="1.500" fill="#fff" stroke="#10106a" stroke-width="1" shape-rendering="auto"/>
<path d="M376.500,67.500 C377.500,64 380,64 381.500,66.500 C383,69 385.500,69 386.800,65.800" fill="none" stroke="#c01010" stroke-width="1.200" shape-rendering="auto"/>
<!-- RLC -->
<g fill="none" stroke="#000" stroke-width="1" shape-rendering="auto">
<path d="M409.500,72 v-9.500 h3 l1,1 v2.500 l-1,1 h-3 M412,67.500 l2,4.500"/>
<path d="M417.500,62 v9.500 h5"/>
<path d="M428.500,64.500 v-1 l-1,-1 h-2 l-1,1 v7 l1,1 h2 l1,-1 v-1"/>
</g>
<!-- orange mouse cursor -->
<g shape-rendering="auto">
<path d="M18,48 L35.900,59.500 L33.500,72.300 L30.500,73.700 L18.400,69.100 z" fill="#ee6c14"/>
<path d="M18,48 L35.900,59.500 L35.500,62.300 L20.500,53.400 L20.600,69.900 L18.400,69.100 z" fill="#2c2a2e"/>
<path d="M20.400,52.500 L29.600,58.200 L31.900,59.800 L30,70 L20.400,67.300 z" fill="#160a04"/>
<path d="M21.300,55 L29.200,59.300 L27.900,65.200 L21.700,63.300 z" fill="#f47a22"/>
<path d="M23,57 L27,59.500 L26,63 L23,62 z" fill="#fa8a34"/>
<path d="M30.500,73.700 L33.500,72.300 L33.800,70.800 L30.200,72.600 z" fill="#fbd9bd"/>
</g>
</g>
</g>
</svg>
</body>
</html>
